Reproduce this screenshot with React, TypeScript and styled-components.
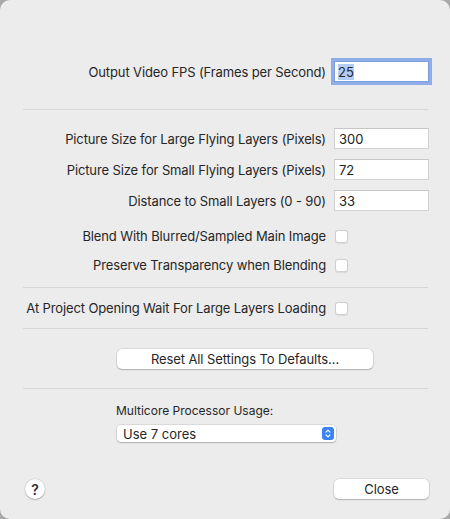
import React from "react";
import styled, { createGlobalStyle } from "styled-components";

const GlobalStyle = createGlobalStyle`
    html, body {
        margin: 0;
        padding: 0;
        background: #a9a9a9;
    }
    * {
        box-sizing: border-box;
    }
`;

const Window = styled.div`
    width: 450px;
    height: 519px;
    background: #ececec;
    border-radius: 10px;
    display: flex;
    flex-direction: column;
    font-family: Inter, "Liberation Sans", sans-serif;
    font-size: 13px;
    color: #262626;
    padding-top: 61px;
    overflow: hidden;
`;

const FormGrid = styled.div<{ $gap: number }>`
    display: grid;
    grid-template-columns: 326px 95px;
    column-gap: 8px;
    row-gap: ${p => p.$gap}px;
    align-items: center;
`;

const Label = styled.label`
    justify-self: end;
    white-space: nowrap;
    line-height: 16px;
    letter-spacing: -0.12px;
`;

const TextField = styled.input`
    width: 95px;
    height: 21px;
    border: 1px solid #d2d2d2;
    border-top-color: #c6c6c6;
    background: #fff;
    font: inherit;
    color: #222;
    padding: 0 4px;
    margin: 0;
    outline: none;
`;

const Selected = styled.span`
    background: #b3cdf6;
`;

const FocusedField = styled.div`
    width: 95px;
    height: 21px;
    border: 1px solid #7e9fdd;
    background: #fff;
    padding: 0 3px;
    display: flex;
    align-items: center;
    box-shadow: 0 0 0 3px rgba(120, 158, 232, 0.8);
`;

const Checkbox = styled.span`
    width: 13px;
    height: 13px;
    border-radius: 3px;
    background: #fff;
    border: 1px solid #cfcfcf;
    box-shadow: 0 0.5px 1px rgba(0, 0, 0, 0.08);
    margin-left: 1px;
`;

const Separator = styled.hr<{ $top: number }>`
    margin: ${p => p.$top}px 22px 0 23px;
    border: none;
    border-top: 1px solid #d7d7d7;
    height: 0;
`;

const Section = styled.div<{ $top: number }>`
    margin-top: ${p => p.$top}px;
`;

const PushButton = styled.button<{ $width: number }>`
    width: ${p => p.$width}px;
    height: 20px;
    border: none;
    border-radius: 5px;
    background: #fff;
    font: inherit;
    letter-spacing: -0.1px;
    color: #262626;
    padding: 0;
    box-shadow: 0 0 0 0.5px rgba(0, 0, 0, 0.15), 0 1px 1.5px rgba(0, 0, 0, 0.2);
`;

const CenterBlock = styled.div<{ $top: number }>`
    margin: ${p => p.$top}px 0 0 117px;
    display: flex;
    flex-direction: column;
`;

const SmallLabel = styled.div`
    font-size: 12px;
    line-height: 16px;
    margin-left: -1px;
`;

const PopUp = styled.div`
    margin-top: 6px;
    width: 219px;
    height: 17px;
    background: #fff;
    border-radius: 4px;
    box-shadow: 0 0 0 0.5px rgba(0, 0, 0, 0.15), 0 1px 1.5px rgba(0, 0, 0, 0.2);
    display: flex;
    align-items: center;
    justify-content: space-between;
    padding: 0 2px 0 6px;
`;

const Stepper = styled.span`
    width: 12px;
    height: 13px;
    border-radius: 3px;
    background: #3a82f7;
    display: flex;
    align-items: center;
    justify-content: center;
`;

const Footer = styled.div`
    margin-top: auto;
    padding: 0 21px 20px 25px;
    display: flex;
    justify-content: space-between;
    align-items: center;
`;

const HelpButton = styled.button`
    width: 20px;
    height: 20px;
    border-radius: 50%;
    border: none;
    background: #fff;
    font: inherit;
    font-size: 14px;
    font-weight: 600;
    color: #333;
    padding: 0;
    box-shadow: 0 0 0 0.5px rgba(0, 0, 0, 0.12), 0 1px 1.5px rgba(0, 0, 0, 0.22);
`;

const sizeRows = [
    { label: "Picture Size for Large Flying Layers (Pixels)", value: "300" },
    { label: "Picture Size for Small Flying Layers (Pixels)", value: "72" },
    { label: "Distance to Small Layers (0 - 90)", value: "33" },
];

const blendRows = [
    "Blend With Blurred/Sampled Main Image",
    "Preserve Transparency when Blending",
];

export default function App() {
    return (
        <>
            <GlobalStyle />
            <Window>
                <FormGrid $gap={0}>
                    <Label>Output Video FPS (Frames per Second)</Label>
                    <FocusedField>
                        <Selected>25</Selected>
                    </FocusedField>
                </FormGrid>

                <Separator $top={27} />

                <Section $top={18}>
                    <FormGrid $gap={10}>
                        {sizeRows.map(row => (
                            <React.Fragment key={row.label}>
                                <Label>{row.label}</Label>
                                <TextField defaultValue={row.value} />
                            </React.Fragment>
                        ))}
                    </FormGrid>
                </Section>

                <Section $top={17}>
                    <FormGrid $gap={13}>
                        {blendRows.map(label => (
                            <React.Fragment key={label}>
                                <Label>{label}</Label>
                                <Checkbox />
                            </React.Fragment>
                        ))}
                    </FormGrid>
                </Section>

                <Separator $top={14} />

                <Section $top={12}>
                    <FormGrid $gap={0}>
                        <Label>At Project Opening Wait For Large Layers Loading</Label>
                        <Checkbox />
                    </FormGrid>
                </Section>

                <Separator $top={12} />

                <CenterBlock $top={20}>
                    <PushButton $width={256}>Reset All Settings To Defaults...</PushButton>
                </CenterBlock>

                <Separator $top={19} />

                <CenterBlock $top={14}>
                    <SmallLabel>Multicore Processor Usage:</SmallLabel>
                    <PopUp>
                        <span>Use 7 cores</span>
                        <Stepper>
                            <svg width="6" height="9" viewBox="0 0 6 9" fill="none">
                                <path
                                    d="M1 3.2 L3 1.2 L5 3.2 M1 5.8 L3 7.8 L5 5.8"
                                    stroke="#fff"
                                    strokeWidth="1.2"
                                    strokeLinecap="round"
                                    strokeLinejoin="round"
                                />
                            </svg>
                        </Stepper>
                    </PopUp>
                </CenterBlock>

                <Footer>
                    <HelpButton>?</HelpButton>
                    <PushButton $width={95}>Close</PushButton>
                </Footer>
            </Window>
        </>
    );
}
